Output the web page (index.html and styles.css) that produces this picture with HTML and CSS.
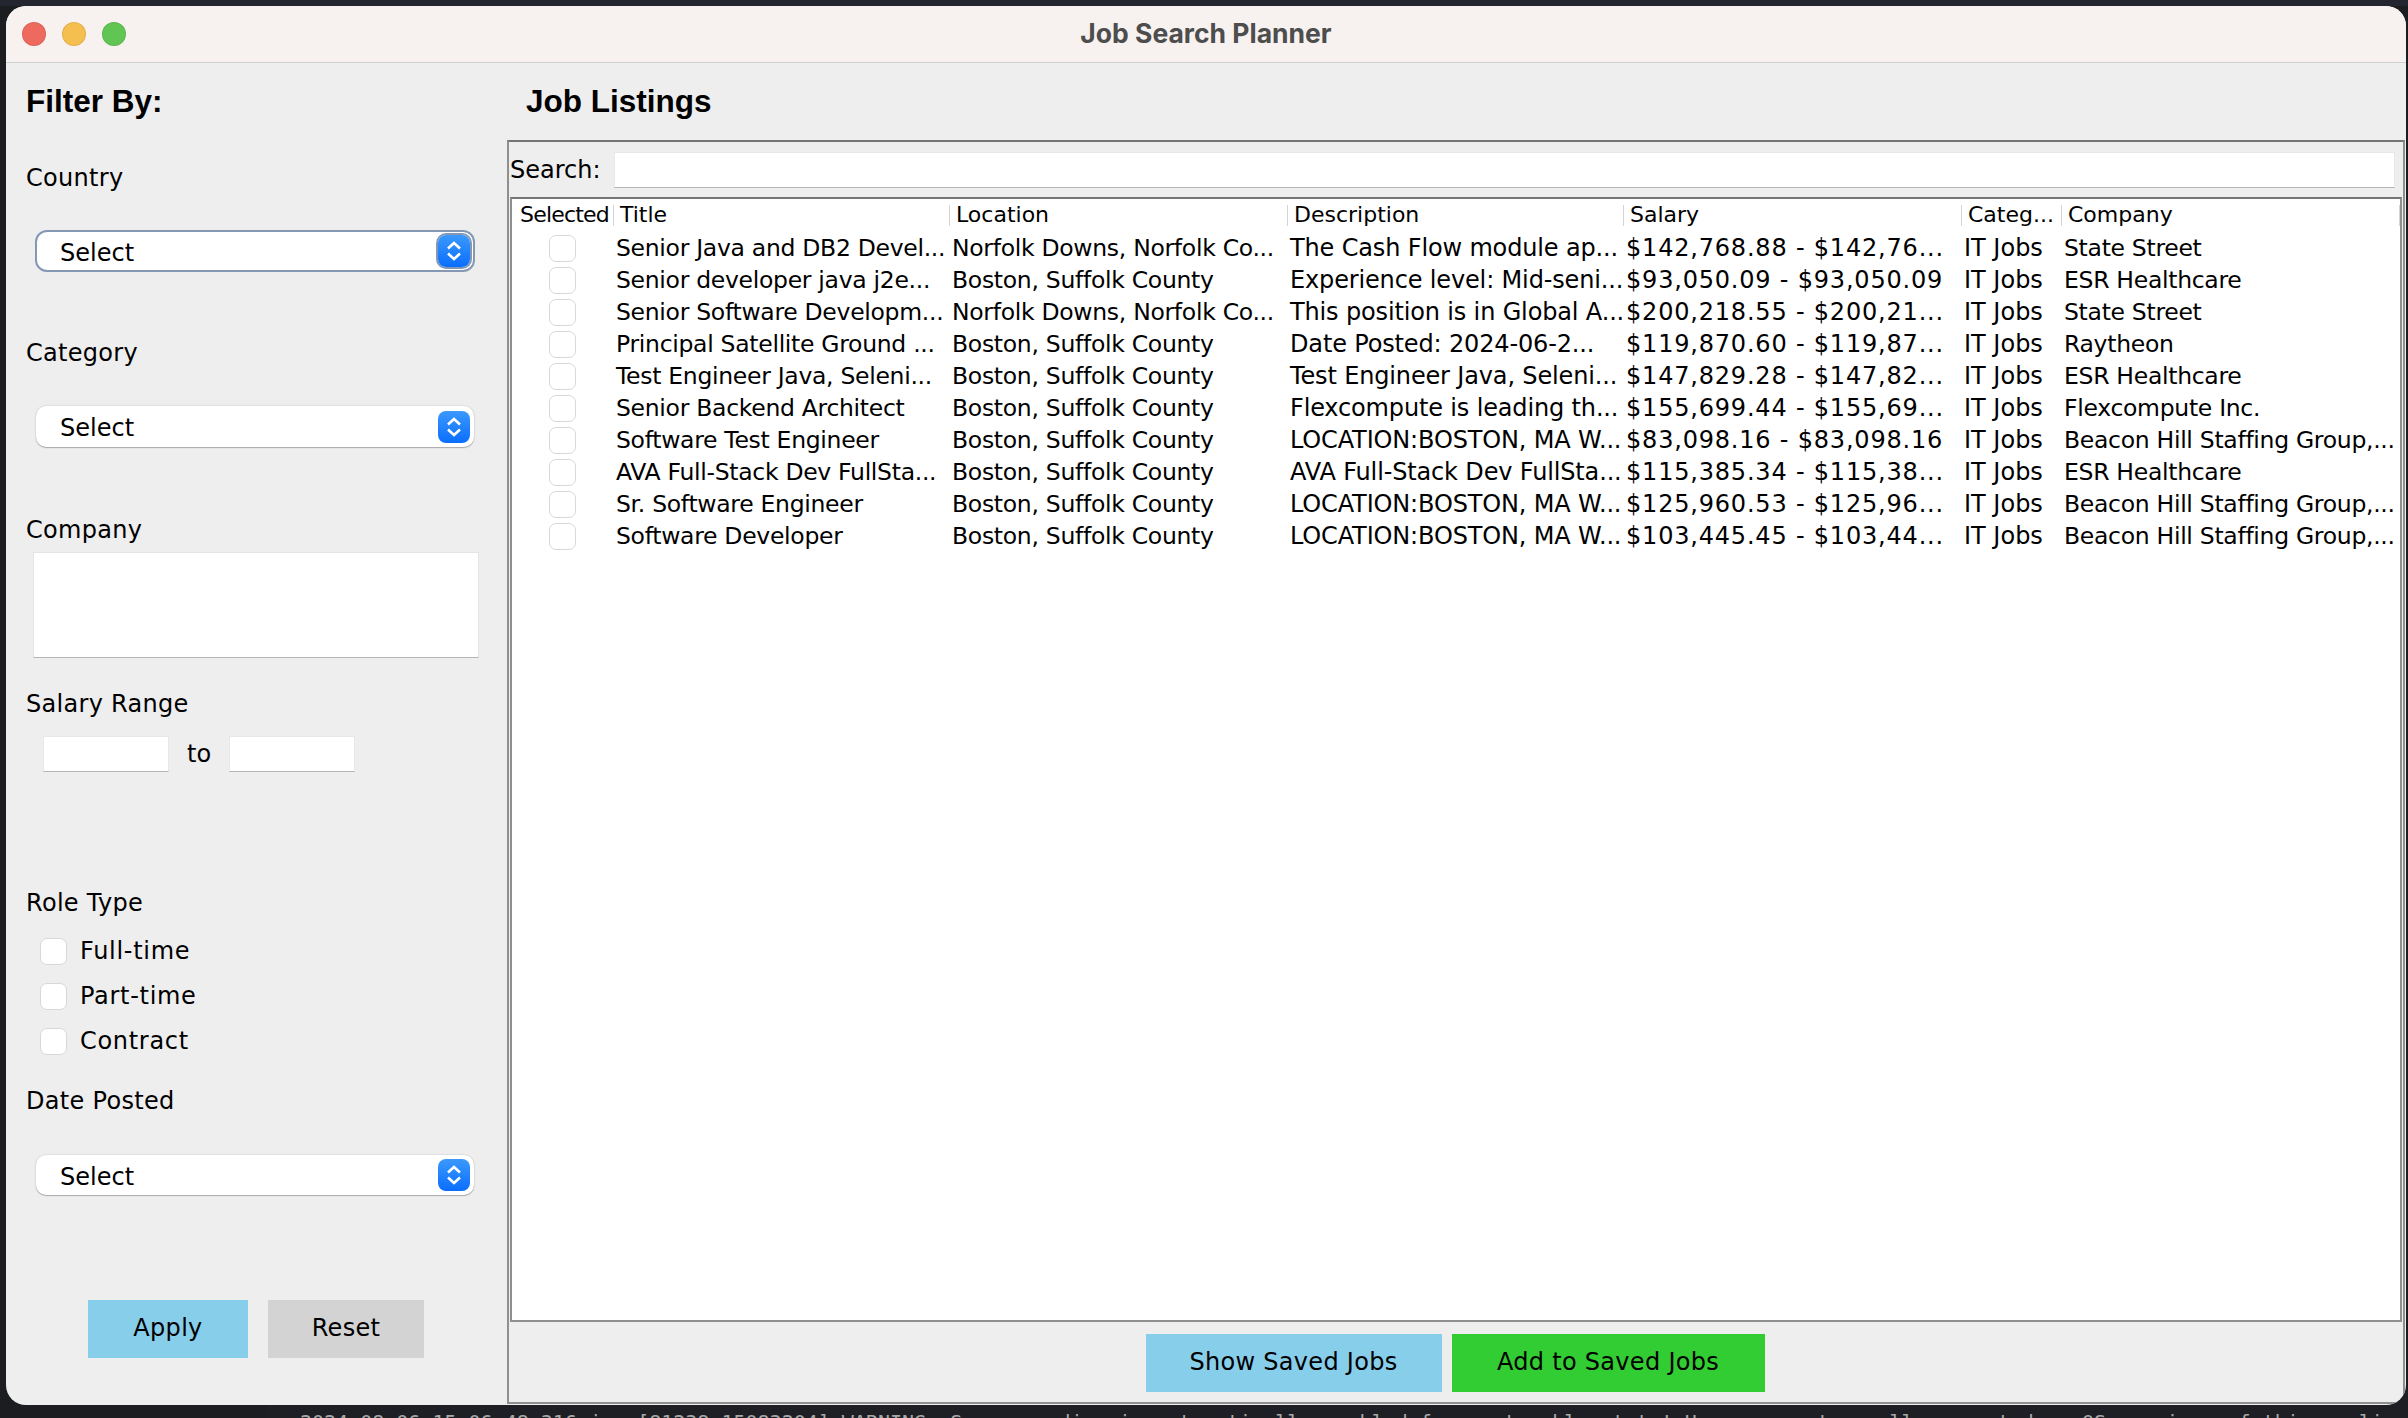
FILE: index.html
```html
<!DOCTYPE html>
<html lang="en">
<head>
  <meta charset="UTF-8" />
  <title>Job Search Planner</title>
  <link rel="stylesheet" href="styles.css">
</head>
<body>
  <div class="terminal">2024-08-06 15:06:48.316 java[81238:15083204] WARNING: Secure coding is automatically enabled for restorable state! However, not on all supported macOS versions of this application.</div>
  <div class="window">
    <div class="titlebar">
      <div class="lights"><span class="red"></span><span class="yellow"></span><span class="green"></span></div>
      <div class="title">Job Search Planner</div>
    </div>
    <div class="content">
      <aside class="sidebar">
        <h2>Filter By:</h2>
        <label class="lbl l-country">Country</label>
        <div class="select focus s-country"><span>Select</span><svg viewBox="0 0 32 32"><path d="M10 13.5L16 8l6 5.5M10 18.5L16 24l6-5.5"/></svg></div>
        <label class="lbl l-category">Category</label>
        <div class="select s-category"><span>Select</span><svg viewBox="0 0 32 32"><path d="M10 13.5L16 8l6 5.5M10 18.5L16 24l6-5.5"/></svg></div>
        <label class="lbl l-company">Company</label>
        <div class="listbox"></div>
        <label class="lbl l-salary">Salary Range</label>
        <div class="range"><div class="field"></div><span>to</span><div class="field"></div></div>
        <label class="lbl l-role">Role Type</label>
        <div class="check first"><i></i>Full-time</div>
        <div class="check"><i></i>Part-time</div>
        <div class="check"><i></i>Contract</div>
        <label class="lbl l-date">Date Posted</label>
        <div class="select s-date"><span>Select</span><svg viewBox="0 0 32 32"><path d="M10 13.5L16 8l6 5.5M10 18.5L16 24l6-5.5"/></svg></div>
        <div class="side-btns"><button class="apply">Apply</button><button class="reset">Reset</button></div>
      </aside>
      <main class="main">
        <h2>Job Listings</h2>
        <div class="panel">
          <div class="searchbar"><span>Search:</span><div class="searchbox"></div></div>
          <div class="tablewrap">
            <table>
              <thead>
                <tr><th>Selected</th><th>Title</th><th>Location</th><th>Description</th><th>Salary</th><th>Categ...</th><th>Company</th></tr>
              </thead>
              <tbody id="rows"></tbody>
            </table>
          </div>
          <div class="bottom-btns"><button class="show">Show Saved Jobs</button><button class="add">Add to Saved Jobs</button></div>
        </div>
      </main>
    </div>
  </div>
  <script>
    const jobs = [
      ['Senior Java and DB2 Devel...', 'Norfolk Downs, Norfolk Co...', 'The Cash Flow module ap...', '$142,768.88 - $142,76...', 'State Street'],
      ['Senior developer java j2e...', 'Boston, Suffolk County', 'Experience level: Mid-seni...', '$93,050.09 - $93,050.09', 'ESR Healthcare'],
      ['Senior Software Developm...', 'Norfolk Downs, Norfolk Co...', 'This position is in Global A...', '$200,218.55 - $200,21...', 'State Street'],
      ['Principal Satellite Ground ...', 'Boston, Suffolk County', 'Date Posted: 2024-06-2...', '$119,870.60 - $119,87...', 'Raytheon'],
      ['Test Engineer Java, Seleni...', 'Boston, Suffolk County', 'Test Engineer Java, Seleni...', '$147,829.28 - $147,82...', 'ESR Healthcare'],
      ['Senior Backend Architect', 'Boston, Suffolk County', 'Flexcompute is leading th...', '$155,699.44 - $155,69...', 'Flexcompute Inc.'],
      ['Software Test Engineer', 'Boston, Suffolk County', 'LOCATION:BOSTON, MA W...', '$83,098.16 - $83,098.16', 'Beacon Hill Staffing Group,...'],
      ['AVA Full-Stack Dev FullSta...', 'Boston, Suffolk County', 'AVA Full-Stack Dev FullSta...', '$115,385.34 - $115,38...', 'ESR Healthcare'],
      ['Sr. Software Engineer', 'Boston, Suffolk County', 'LOCATION:BOSTON, MA W...', '$125,960.53 - $125,96...', 'Beacon Hill Staffing Group,...'],
      ['Software Developer', 'Boston, Suffolk County', 'LOCATION:BOSTON, MA W...', '$103,445.45 - $103,44...', 'Beacon Hill Staffing Group,...']
    ];
    const tbody = document.getElementById('rows');
    jobs.forEach((job) => {
      const tr = document.createElement('tr');
      tr.innerHTML = `<td class="cb"><i></i></td><td class="txt">${job[0]}</td><td class="txt">${job[1]}</td><td class="desc">${job[2]}</td><td class="sal">${job[3]}</td><td>IT Jobs</td><td class="txt">${job[4]}</td>`;
      tbody.appendChild(tr);
    });
  </script>
</body>
</html>
```

FILE: styles.css
```css
* {
  box-sizing: border-box;
}
html, body {
  margin: 0;
  height: 100%;
  overflow: hidden;
}
body {
  position: relative;
  background: linear-gradient(#23262f 6px, #1b1d21 6px);
  font-family: "DejaVu Sans", sans-serif;
  font-size: 24px;
  color: #000;
}
.terminal {
  position: absolute;
  left: 268px;
  right: 0;
  bottom: 0;
  height: 30px;
  padding: 22px 0 0 32px;
  background: #1e1f24;
  color: #a8a8a8;
  font-family: "DejaVu Sans Mono", monospace;
  font-size: 20px;
  white-space: nowrap;
  overflow: hidden;
}
.window {
  position: absolute;
  left: 6px;
  top: 6px;
  width: 2400px;
  height: 1399px;
  background-color: #eeeeee;
  border-radius: 20px;
  overflow: hidden;
}
.titlebar {
  position: relative;
  height: 57px;
  padding-bottom: 3px;
  background-color: #f7f2f0;
  border-bottom: 1px solid #cfcfcf;
  display: flex;
  align-items: center;
  justify-content: center;
}
.lights {
  position: absolute;
  left: 16px;
  top: 16px;
  display: flex;
  gap: 16px;
}
.lights span {
  width: 24px;
  height: 24px;
  border-radius: 50%;
  box-shadow: inset 0 0 0 1px rgba(0,0,0,0.08);
}
.red { background: #ee6a5f; }
.yellow { background: #f5bf4f; }
.green { background: #61c554; }
.title {
  font-family: Inter, sans-serif;
  font-weight: 700;
  font-size: 26.5px;
  color: #4d4d4d;
}
.content {
  display: flex;
  height: 1342px;
}
h2 {
  margin: 0;
  font-family: "Liberation Sans", sans-serif;
  font-weight: bold;
  font-size: 31.5px;
  line-height: 36px;
}
.sidebar {
  width: 501px;
  padding: 20px 0 0 20px;
  display: flex;
  flex-direction: column;
  align-items: flex-start;
}
.lbl {
  display: block;
  line-height: 30px;
  letter-spacing: 0.3px;
}
.l-country { margin-top: 44px; }
.l-category { margin-top: 66px; }
.l-company { margin-top: 68px; }
.l-salary { margin-top: 31px; }
.l-role { margin-top: 116px; }
.l-date { margin-top: 30px; }
.select {
  margin: 38px 0 0 10px;
  width: 438px;
  height: 41px;
  padding: 0 4px 0 24px;
  display: flex;
  align-items: center;
  justify-content: space-between;
  background: #fff;
  border-radius: 10px;
  box-shadow: 0 0 2px rgba(0,0,0,0.2), 0 1px 1px rgba(0,0,0,0.25);
}
.select span {
  padding-top: 3px;
}
.select.focus {
  margin: 37px 0 0 9px;
  width: 440px;
  height: 42px;
  padding: 0 3px 0 23px;
  border: 2px solid #8498b3;
  border-radius: 12px;
  box-shadow: none;
}
.select svg {
  width: 32px;
  height: 32px;
  background: linear-gradient(#3b99fc, #0a6efd);
  border-radius: 8px;
}
.select.focus svg {
  box-shadow: 0 0 0 2px #8498b3;
}
.select path {
  fill: none;
  stroke: #fff;
  stroke-width: 2.6;
}
.s-date {
  margin-top: 39px;
  height: 40px;
}
.listbox {
  margin: 7px 0 0 7px;
  width: 446px;
  height: 106px;
  background: #fff;
  border: 1px solid #e4e4e4;
  border-bottom: 1px solid #b5b5b5;
}
.range {
  margin: 17px 0 0 17px;
  display: flex;
  align-items: center;
  gap: 18px;
}
.field {
  width: 126px;
  height: 36px;
  background: #fff;
  border: 1px solid #e8e8e8;
  border-bottom: 1px solid #b5b5b5;
}
.check {
  margin: 15px 0 0 14px;
  height: 30px;
  display: flex;
  align-items: center;
  gap: 13px;
  line-height: 30px;
  letter-spacing: 0.7px;
}
.check.first {
  margin-top: 18px;
}
.check i, .cb i {
  display: block;
  width: 27px;
  height: 27px;
  background: #fff;
  border: 1px solid #d8d8d8;
  border-radius: 7px;
}
.side-btns {
  margin: 105px 0 0 62px;
  display: flex;
  gap: 20px;
}
button {
  border: none;
  height: 58px;
  font-family: inherit;
  font-size: 24px;
  color: #000;
  padding: 0 0 3px;
  letter-spacing: 0.3px;
}
.apply { width: 160px; background-color: #87ceeb; }
.reset { width: 156px; background-color: #d3d3d3; }
.main {
  flex: 1;
  display: flex;
  flex-direction: column;
}
.main h2 {
  margin: 20px 0 0 19px;
}
.panel {
  margin-top: 21px;
  width: 1898px;
  height: 1264px;
  display: flex;
  flex-direction: column;
  border: 2px solid #8f8f8f;
  border-top-color: #757575;
}
.searchbar {
  height: 55px;
  display: flex;
  align-items: flex-start;
  padding: 10px 8px 0 1px;
  line-height: 36px;
}
.searchbar span {
  width: 104px;
}
.searchbox {
  flex: 1;
  height: 36px;
  background: #fff;
  border: 1px solid #e8e8e8;
  border-bottom: 1px solid #b5b5b5;
}
.tablewrap {
  margin-left: 1px;
  width: 1892px;
  height: 1125px;
  background: #fff;
  border: 2px solid #8f8f8f;
  border-top-color: #757575;
  overflow: hidden;
}
table {
  border-collapse: collapse;
  table-layout: fixed;
  width: 1888px;
}
th {
  height: 33px;
  padding: 0 0 2px 6px;
  font-weight: normal;
  font-size: 22px;
  text-align: left;
  white-space: nowrap;
  overflow: hidden;
  background: linear-gradient(#d5d5d5, #d5d5d5) no-repeat right center / 1px 21px;
}
th:first-child {
  padding-left: 8px;
  letter-spacing: -0.8px;
}
td {
  height: 32px;
  padding: 0 0 0 2px;
  white-space: nowrap;
  overflow: hidden;
}
td.txt {
  font-size: 23.5px;
  letter-spacing: -0.3px;
}
td.desc {
  letter-spacing: -0.15px;
}
td.sal {
  letter-spacing: 0.8px;
}
th:nth-child(1) { width: 102px; }
th:nth-child(2) { width: 336px; }
th:nth-child(3) { width: 338px; }
th:nth-child(4) { width: 336px; }
th:nth-child(5) { width: 338px; }
th:nth-child(6) { width: 100px; }
td.cb i {
  margin: 0 0 0 35px;
}
.bottom-btns {
  flex: 1;
  display: flex;
  justify-content: center;
  align-items: flex-start;
  gap: 10px;
  padding: 12px 2px 0 0;
}
.show { width: 296px; background-color: #87ceeb; }
.add { width: 313px; background-color: #32cd32; }
```
